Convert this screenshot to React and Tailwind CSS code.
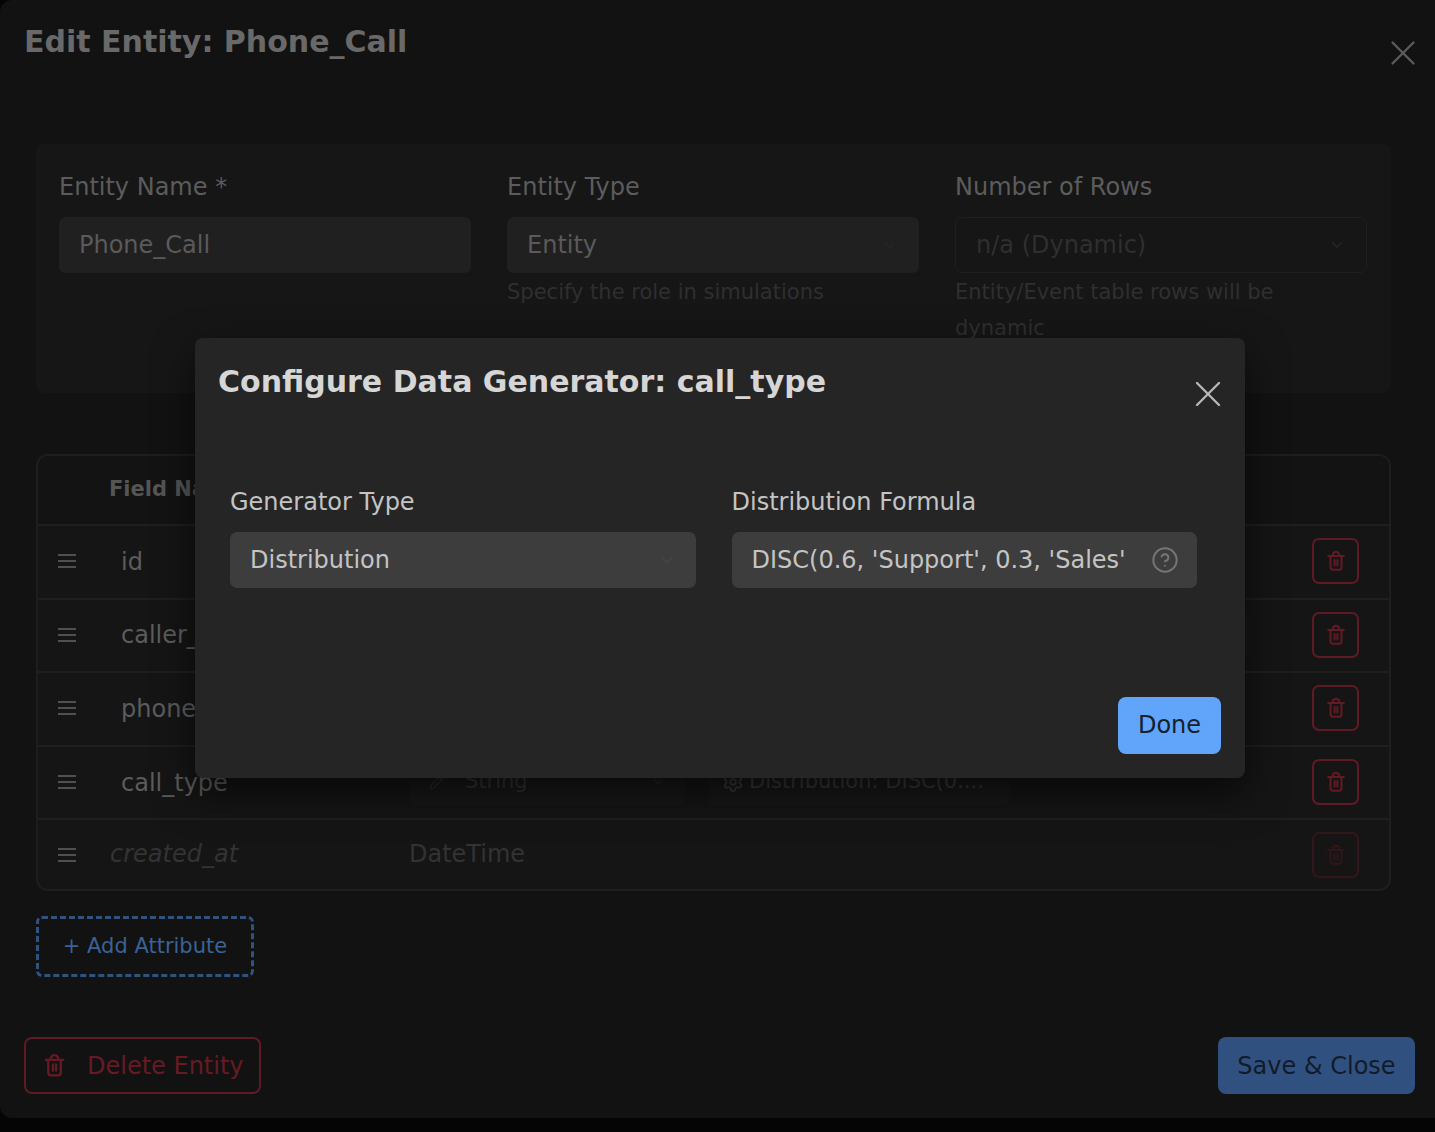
import React from "react";
import { ChevronDown, CircleHelp, Settings, X, Pencil } from "lucide-react";

const font = { fontFamily: '"DejaVu Sans", sans-serif' };

function Trash({ className }) {
  return (
    <svg viewBox="0 0 24 24" fill="none" stroke="currentColor" strokeWidth="2.2" strokeLinecap="round" strokeLinejoin="round" className={className}>
      <path d="M3.5 6.5h17" />
      <path d="M6 6.5V19a2.5 2.5 0 0 0 2.5 2.5h7A2.5 2.5 0 0 0 18 19V6.5" />
      <path d="M8.5 6.5V5.5a3.5 3.5 0 0 1 7 0v1" />
      <path d="M10.5 11v6" />
      <path d="M13.5 11v6" />
    </svg>
  );
}

function Grip() {
  return (
    <div className="flex w-[18px] flex-col gap-[4px]">
      <div className="h-[2px] bg-[#505050]" />
      <div className="h-[2px] bg-[#505050]" />
      <div className="h-[2px] bg-[#505050]" />
    </div>
  );
}

function DeleteButton({ dim }) {
  return (
    <div className={`flex h-[46px] w-[47px] items-center justify-center rounded-[7px] border-2 ${dim ? "border-[#32161a] text-[#32161a]" : "border-[#5f1a23] text-[#641a24]"}`}>
      <Trash className="h-[22px] w-[22px]" />
    </div>
  );
}

function Row({ name, type, gen, genWide }) {
  return (
    <div className="flex h-[73.6px] items-center border-t-2 border-[#1f1f1f] pb-[1px] pl-[20px] pr-[30px]">
      <Grip />
      <div className="ml-[45px] w-[288px] pt-[1px] text-[24px] text-[#5c5c5c]">{name}</div>
      <div className="flex h-[46px] w-[276px] items-center justify-between rounded-[6px] bg-[#181818] pl-[20px] pr-[20px] text-[21px] text-[#333333]">
        <span className="flex items-center gap-[20px]">
          <Pencil className="h-[16px] w-[16px] text-[#2a2a2a]" />
          {type}
        </span>
        <ChevronDown className="h-[14px] w-[14px] text-[#262626]" />
      </div>
      <div className={`ml-[24px] flex h-[46px] items-center gap-[5px] rounded-[6px] bg-[#181818] px-[13px] text-[21px] text-[#383838] ${genWide ? "w-[540px]" : "w-[300px]"}`}>
        <Settings className="h-[22px] w-[22px] shrink-0 text-[#383838]" />
        <span className="whitespace-nowrap">{gen}</span>
      </div>
      <div className="ml-auto">
        <DeleteButton />
      </div>
    </div>
  );
}

function Field({ label, value, hint, select, disabled }) {
  return (
    <div>
      <div className="pt-[1px] text-[24px] leading-[36px] text-[#5c5c5c]">{label}</div>
      <div className={`mt-[12px] flex h-[56px] items-center justify-between rounded-[7px] px-[20px] text-[24px] ${disabled ? "border border-[#1f1f1f] text-[#2f2f2f]" : "bg-[#202020] text-[#5a5a5a]"}`}>
        <span>{value}</span>
        {select && <ChevronDown className="h-[18px] w-[18px] text-[#262626]" />}
      </div>
      {hint && <div className="mt-[1px] text-[21px] leading-[36px] text-[#2f2f2f]">{hint}</div>}
    </div>
  );
}

export default function App() {
  return (
    <div style={font} className="relative h-[1132px] w-[1435px] overflow-hidden bg-[#050505]">
      <div className="flex h-[1118px] flex-col rounded-l-[12px] bg-[#121212] pl-[24px] pr-[20px]">
        <div className="flex h-[144px] items-start justify-between">
          <div className="mt-[19px] text-[30px] font-bold leading-[46px] text-[#696969]">Edit Entity: Phone_Call</div>
          <X strokeWidth={1.3} className="mr-[-9px] mt-[32px] h-[42px] w-[42px] text-[#5c5c5c]" />
        </div>

        <div className="ml-[12px] mr-[24px] grid h-[249px] grid-cols-3 gap-x-[36px] rounded-[8px] bg-[#161616] py-[24px] pl-[23px] pr-[24px]">
          <Field label="Entity Name *" value="Phone_Call" />
          <Field label="Entity Type" value="Entity" select hint="Specify the role in simulations" />
          <Field label="Number of Rows" value="n/a (Dynamic)" select disabled hint="Entity/Event table rows will be dynamic" />
        </div>

        <div className="ml-[12px] mr-[24px] mt-[61px] h-[437px] overflow-hidden rounded-[12px] border-2 border-[#1e1e1e] bg-[#151515]">
          <div className="flex h-[68px] items-center bg-[#131313] pl-[71px] text-[21px] font-bold text-[#555555]">
            <span>Field Name</span>
          </div>
          <Row name="id" type="Integer" gen="" />
          <Row name="caller_id" type="Integer" gen="" genWide />
          <Row name="phone_number" type="String" gen="" />
          <Row name="call_type" type="String" gen="Distribution: DISC(0...." />
          <div className="flex h-[70.6px] items-center border-t-2 border-[#1f1f1f] pl-[20px] pr-[30px]">
            <Grip />
            <div className="ml-[34px] w-[299px] pb-[2px] text-[24px] italic text-[#333333]">created_at</div>
            <div className="pb-[2px] text-[24px] text-[#333333]">DateTime</div>
            <div className="ml-auto">
              <DeleteButton dim />
            </div>
          </div>
        </div>

        <div className="ml-[12px] mt-[25px] flex h-[61px] w-[218px] items-center justify-center rounded-[6px] border-[3px] border-dashed border-[#30527f] text-[21px] text-[#3a6295]">
          + Add Attribute
        </div>

        <div className="mt-[60px] flex items-center justify-between">
          <div className="flex h-[57px] w-[237px] items-center gap-[20px] rounded-[8px] border-2 border-[#5f1a23] pl-[16px] text-[24px] text-[#681a24]">
            <Trash className="h-[25px] w-[25px]" />
            Delete Entity
          </div>
          <div className="flex h-[57px] w-[197px] items-center justify-center rounded-[8px] bg-[#305180] text-[24px] text-[#121b29]">
            Save &amp; Close
          </div>
        </div>
      </div>

      <div className="absolute left-[195px] top-[338px] h-[440px] w-[1050px] rounded-[8px] bg-[#252525] shadow-[0_16px_40px_rgba(0,0,0,0.6)]">
        <div className="flex h-[90px] items-start justify-between pl-[23px] pr-[15px]">
          <div className="mt-[21px] text-[30px] font-bold leading-[46px] text-[#d6d6d6]">Configure Data Generator: call_type</div>
          <X strokeWidth={1.3} className="mt-[34px] h-[44px] w-[44px] text-[#b8b8b8]" />
        </div>
        <div className="mx-[35px] mt-[55px] grid grid-cols-2 gap-x-[36px] pr-[13px]">
          <div>
            <div className="pt-[1px] text-[24px] leading-[36px] text-[#c4c4c4]">Generator Type</div>
            <div className="mt-[12px] flex h-[56px] items-center justify-between rounded-[7px] bg-[#3d3d3d] px-[20px] text-[24px] text-[#c4c4c4]">
              <span>Distribution</span>
              <ChevronDown className="h-[18px] w-[18px] text-[#46464f]" />
            </div>
          </div>
          <div>
            <div className="pt-[1px] text-[24px] leading-[36px] text-[#c4c4c4]">Distribution Formula</div>
            <div className="mt-[12px] flex h-[56px] items-center justify-between rounded-[7px] bg-[#3d3d3d] pl-[20px] pr-[18px] text-[24px] text-[#c4c4c4]">
              <span className="whitespace-nowrap">DISC(0.6, 'Support', 0.3, 'Sales'</span>
              <CircleHelp strokeWidth={1.7} className="h-[28px] w-[28px] text-[#757575]" />
            </div>
          </div>
        </div>
        <div className="absolute bottom-[24px] right-[24px] flex h-[57px] w-[103px] items-center justify-center rounded-[8px] bg-[#60a5fa] pb-[2px] text-[24px] text-[#16202e]">
          Done
        </div>
      </div>
    </div>
  );
}
